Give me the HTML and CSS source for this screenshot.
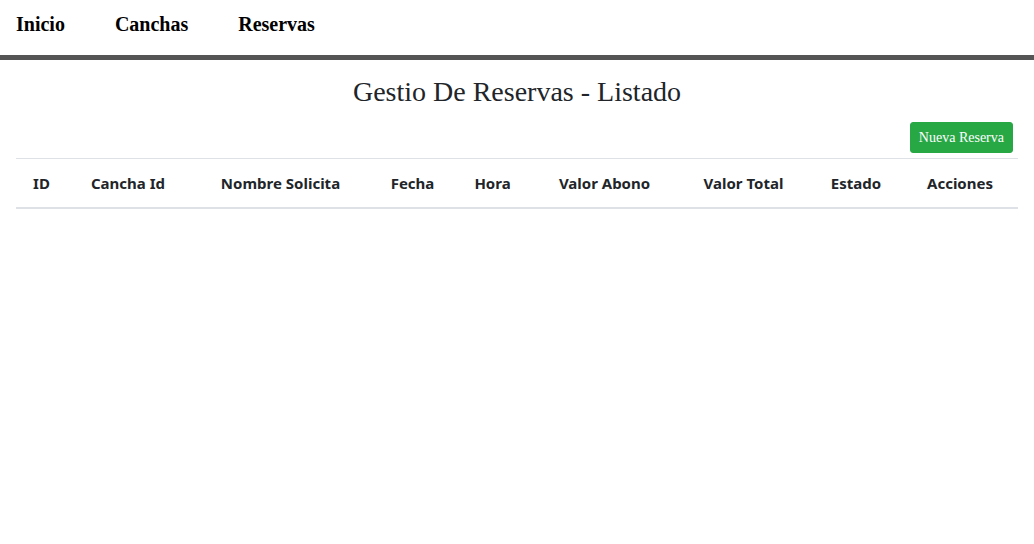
FILE: index.html
```html
<!DOCTYPE html>
<html lang="es">
<head>
<meta charset="utf-8">
<title>Gestion De Reservas</title>
<link rel="stylesheet" href="styles.css">
</head>
<body>
<nav class="topnav">
  <a class="nav-link" href="#">Inicio</a>
  <a class="nav-link" href="#">Canchas</a>
  <a class="nav-link" href="#">Reservas</a>
</nav>
<main class="content">
  <h2 class="page-title">Gestio De Reservas - Listado</h2>
  <div class="actions">
    <a class="btn-new" href="#">Nueva Reserva</a>
  </div>
  <table class="table">
    <thead>
      <tr>
        <th class="c1">ID</th>
        <th class="c2">Cancha Id</th>
        <th class="c3">Nombre Solicita</th>
        <th class="c4">Fecha</th>
        <th class="c5">Hora</th>
        <th class="c6">Valor Abono</th>
        <th class="c7">Valor Total</th>
        <th class="c8">Estado</th>
        <th class="c9">Acciones</th>
      </tr>
    </thead>
    <tbody></tbody>
  </table>
</main>
</body>
</html>
```

FILE: styles.css
```css
* { box-sizing: border-box; }
html, body { margin: 0; padding: 0; background: #fff; }
body { font-family: "Liberation Serif", "Times New Roman", serif; color: #212529; }

.topnav {
  display: flex;
  gap: 50px;
  padding: 13px 16px 19px;
  border-bottom: 5px solid #555555;
}
.nav-link {
  font-family: "Liberation Serif", "Times New Roman", serif;
  font-weight: bold;
  font-size: 20px;
  line-height: 23px;
  color: #000;
  text-decoration: none;
}

.content { padding: 0 16px; }

.page-title {
  margin: 15px 0 0;
  font-family: "Liberation Serif", "Times New Roman", serif;
  font-weight: normal;
  font-size: 28px;
  line-height: 1.2;
  text-align: center;
  color: #212529;
}

.actions {
  display: flex;
  justify-content: flex-end;
  padding: 13px 5px 5px 0;
}
.btn-new {
  display: inline-block;
  font-family: "Liberation Serif", "Times New Roman", serif;
  font-size: 14px;
  line-height: 21px;
  padding: 4px 8px;
  border: 1px solid #28a745;
  border-radius: 3px;
  background: #28a745;
  color: #fff;
  text-decoration: none;
}

.table {
  width: 100%;
  border-collapse: collapse;
  table-layout: fixed;
  color: #212529;
}
.table th {
  font-family: "Segoe UI", "Noto Sans", "Open Sans", sans-serif;
  font-weight: 700;
  font-size: 15px;
  line-height: 24px;
  padding: 12px 0;
  text-align: center;
  border-top: 1px solid #dee2e6;
  border-bottom: 2px solid #dee2e6;
  white-space: nowrap;
}
.c1 { width: 51px; }
.c2 { width: 122px; }
.c3 { width: 183px; }
.c4 { width: 81px; }
.c5 { width: 79px; }
.c6 { width: 145px; }
.c7 { width: 133px; }
.c8 { width: 92px; }
.c9 { width: 116px; }
```
